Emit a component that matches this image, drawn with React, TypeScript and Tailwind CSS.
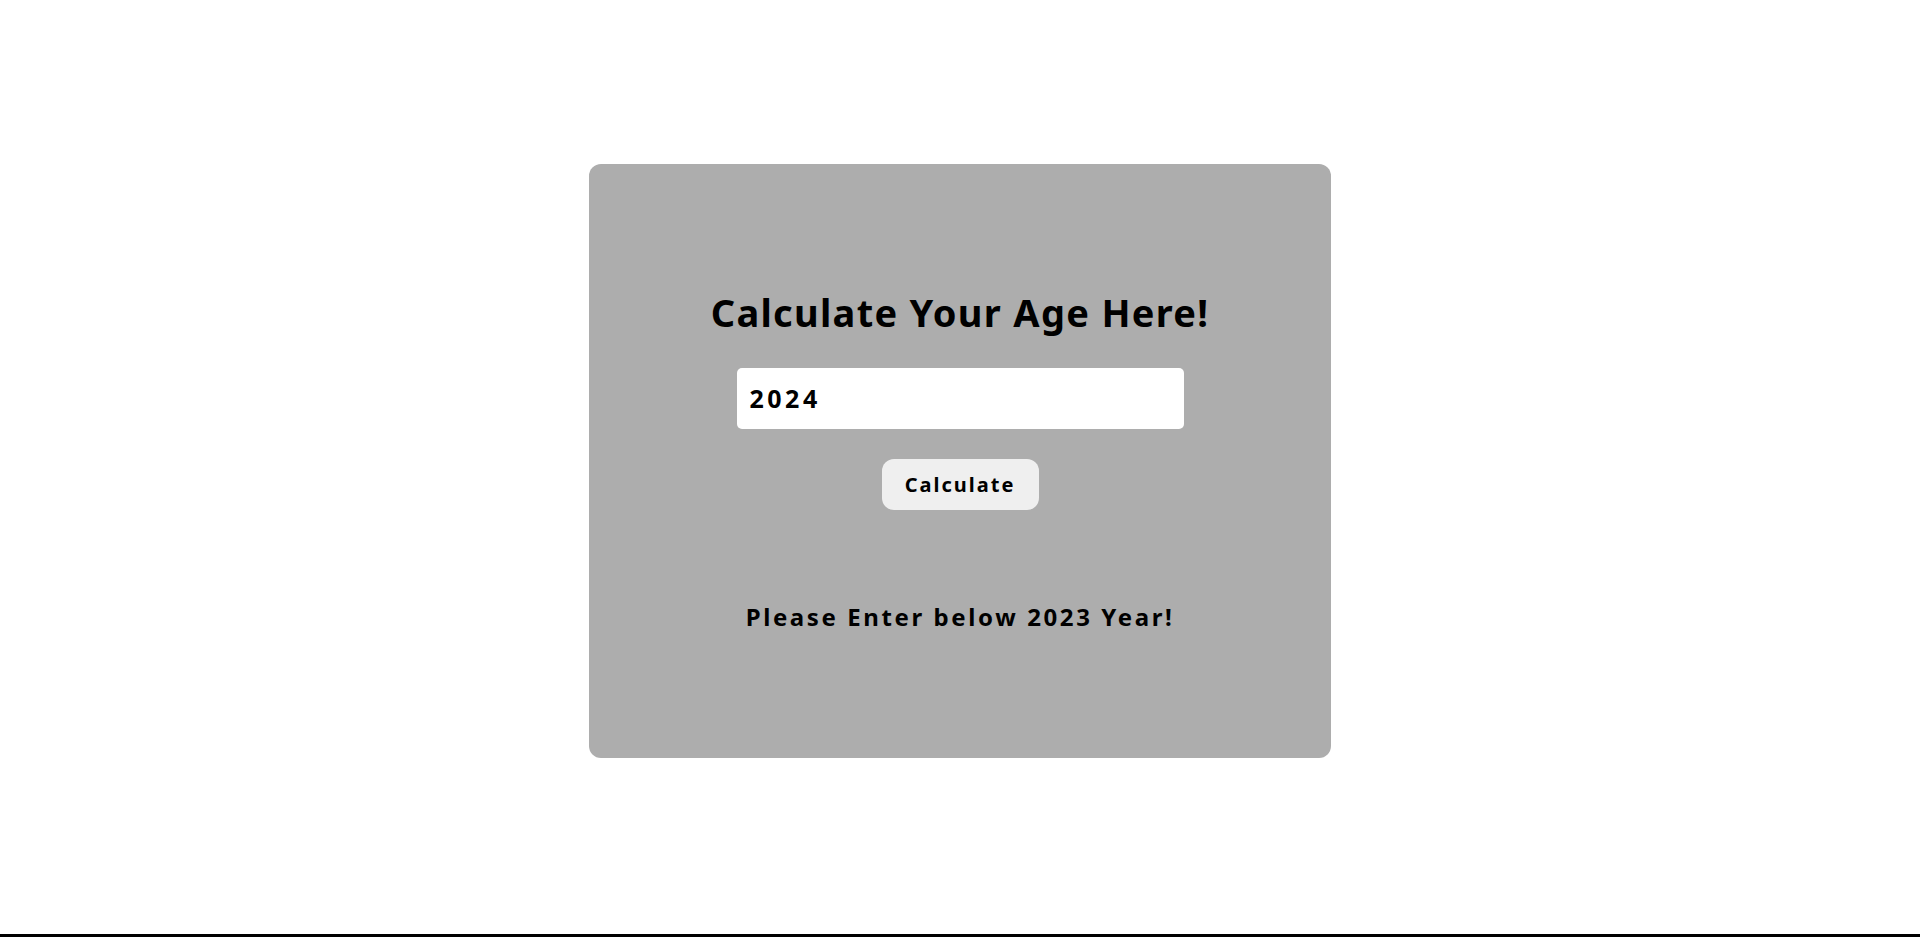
import React from "react";

export default function App() {
  return (
    <div className="w-full h-[937px] bg-white flex flex-col" style={{ fontFamily: '"Noto Sans", "Open Sans", sans-serif' }}>
      <div className="flex-1 flex justify-center pt-[164px]">
        <div className="w-[742px] h-[594px] bg-[#adadad] rounded-[12px] flex flex-col items-center pt-[126px]">
          <h1 className="text-[38px] leading-[44px] font-bold text-black tracking-[1.3px]">Calculate Your Age Here!</h1>
          <div className="mt-[34px] w-[447px] h-[61px] bg-white rounded-[5px] flex items-center px-[13px]">
            <span className="text-[25px] font-bold text-black tracking-[3.5px]">2024</span>
          </div>
          <button className="mt-[30px] w-[157px] h-[51px] bg-[#efefef] rounded-[12px] text-[20px] font-bold text-black tracking-[2px]">Calculate</button>
          <p className="mt-[89px] text-[24px] font-bold text-black tracking-[2.6px]">Please Enter below 2023 Year!</p>
        </div>
      </div>
      <div className="h-[3px] bg-black w-full" />
    </div>
  );
}
